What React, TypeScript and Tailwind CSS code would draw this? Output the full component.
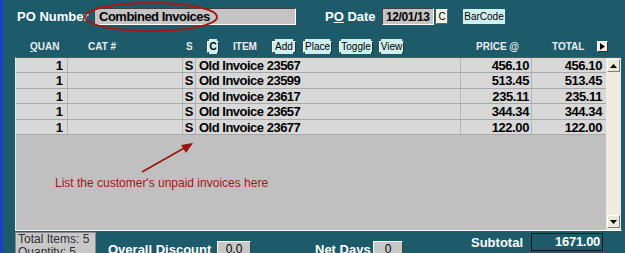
import React from "react";

const rows = [
  { qty: "1", s: "S", item: "Old Invoice 23567", price: "456.10", total: "456.10" },
  { qty: "1", s: "S", item: "Old Invoice 23599", price: "513.45", total: "513.45" },
  { qty: "1", s: "S", item: "Old Invoice 23617", price: "235.11", total: "235.11" },
  { qty: "1", s: "S", item: "Old Invoice 23657", price: "344.34", total: "344.34" },
  { qty: "1", s: "S", item: "Old Invoice 23677", price: "122.00", total: "122.00" },
];

function ScrollButton({ up }: { up: boolean }) {
  return (
    <div className="flex h-[13px] w-[13px] items-center justify-center border border-t-white border-l-white border-r-[#808080] border-b-[#808080] bg-[#ece9d8]">
      <svg width="7" height="4" viewBox="0 0 7 4">
        {up ? <polygon points="0,4 7,4 3.5,0" fill="#000" /> : <polygon points="0,0 7,0 3.5,4" fill="#000" />}
      </svg>
    </div>
  );
}

export default function App() {
  return (
    <div
      className="relative h-[253px] w-[625px] overflow-hidden border-l-[3px] border-[#1c3fd0] bg-[#1d5b6a] text-white"
      style={{ fontFamily: '"Liberation Sans", Arial, sans-serif' }}
    >
      {/* title row */}
      <div className="mt-[8px] flex h-[17px] items-center">
        <div className="ml-[14px] w-[77px] whitespace-nowrap text-[13px] font-bold">PO Number</div>
        <div className="flex h-[17px] w-[202px] items-center border border-t-[#404040] border-l-[#404040] border-r-white border-b-white bg-[#c4c4c4] pl-[4px] text-[13px] font-bold tracking-[-0.5px] text-black">
          Combined Invoices
        </div>
        <div className="ml-[29px] w-[57px] whitespace-nowrap text-[13px] font-bold">
          P<span className="underline">O</span> Date
        </div>
        <div className="flex h-[17px] w-[52px] items-center border border-t-[#404040] border-l-[#404040] border-r-white border-b-white bg-[#c4c4c4] pl-[3px] text-[12px] font-bold tracking-[-0.4px] text-black">
          12/01/13
        </div>
        <div className="ml-[2px] flex h-[15px] w-[12px] items-center justify-center border border-t-white border-l-white border-r-[#606060] border-b-[#606060] bg-[#f4f0e2] text-[10px] text-black">
          C
        </div>
        <div className="ml-[16px] flex h-[12px] w-[40px] items-center justify-center border border-t-white border-l-white border-r-[#303030] border-b-[#303030] bg-[#d0f0f0] text-[10px] text-black">
          <span className="block bg-[#d0f0f0] px-[1px] text-black">BarCode</span>
        </div>
      </div>

      {/* header row */}
      <div className="mt-[15px] flex h-[13px] items-center text-[10px] font-bold text-[#e8eeee]">
        <span className="ml-[27px] w-[58px]">
          <span className="underline">Q</span>UAN
        </span>
        <span className="w-[98px]">CAT #</span>
        <span className="w-[21px]">S</span>
        <div className="flex h-[12px] w-[12px] items-center justify-center border border-t-white border-l-white border-r-[#303030] border-b-[#303030] bg-[#d0f0f0] text-[10px] font-bold text-black">
          <span className="block bg-[#d0f0f0] text-black">C</span>
        </div>
        <span className="ml-[14px] w-[39px]">ITEM</span>
        <div className="flex h-[12px] w-[24px] items-center justify-center border border-t-white border-l-white border-r-[#303030] border-b-[#303030] bg-[#d0f0f0] text-[10px] font-normal text-black">
          <span className="block bg-[#d0f0f0] text-black">Add</span>
        </div>
        <div className="ml-[7px] flex h-[12px] w-[29px] items-center justify-center border border-t-white border-l-white border-r-[#303030] border-b-[#303030] bg-[#d0f0f0] text-[10px] font-normal text-black">
          <span className="block bg-[#d0f0f0] text-black">Place</span>
        </div>
        <div className="ml-[7px] flex h-[12px] w-[34px] items-center justify-center border border-t-white border-l-white border-r-[#303030] border-b-[#303030] bg-[#d0f0f0] text-[10px] font-normal text-black">
          <span className="block bg-[#d0f0f0] text-black">Toggle</span>
        </div>
        <div className="ml-[6px] flex h-[12px] w-[25px] items-center justify-center border border-t-white border-l-white border-r-[#303030] border-b-[#303030] bg-[#d0f0f0] text-[10px] font-normal text-black">
          <span className="block bg-[#d0f0f0] text-black">View</span>
        </div>
        <span className="ml-[72px] w-[76px] whitespace-nowrap">PRICE @</span>
        <span className="w-[45px]">TOTAL</span>
        <div className="flex h-[11px] w-[11px] items-center justify-center border border-t-white border-l-white border-r-[#303030] border-b-[#303030] bg-[#f2f0e6]">
          <svg width="5" height="7" viewBox="0 0 5 7">
            <polygon points="0,0 5,3.5 0,7" fill="#000" />
          </svg>
        </div>
      </div>

      {/* grid */}
      <div className="ml-[12px] mt-[4px] flex h-[174px] w-[607px] border border-t-[#5a5a5a] border-l-[#e8e8e8] border-b-white border-r-[#1d5b6a] bg-[#c0c0c0]">
        <div className="flex flex-1 flex-col text-[13px] font-bold text-black">
          {rows.map((r) => (
            <div key={r.item} className="flex h-[15.4px] border-b border-[#a8a8a8] bg-[#d8d8d8] leading-[15px]">
              <div className="w-[52px] border-r border-[#b4b4b4] pr-[4px] text-right">{r.qty}</div>
              <div className="w-[115px] border-r border-[#b4b4b4]"></div>
              <div className="w-[13px] border-r border-[#b4b4b4] text-center">{r.s}</div>
              <div className="w-[265px] border-r border-[#b4b4b4] pl-[3px] tracking-[-0.5px]">{r.item}</div>
              <div className="w-[71px] border-r border-[#b4b4b4] pr-[2px] text-right tracking-[-0.4px]">{r.price}</div>
              <div className="w-[74px] pr-[4px] text-right tracking-[-0.4px]">{r.total}</div>
            </div>
          ))}
          <div className="pl-[39px] pt-[39px] text-[12px] font-normal text-[#a31616]">
            List the customer&apos;s unpaid invoices here
          </div>
        </div>
        <div className="flex w-[15px] flex-col justify-between bg-[#efebde] pt-[1px] pb-[2px] pl-[1px]">
          <ScrollButton up />
          <ScrollButton up={false} />
        </div>
      </div>

      {/* bottom row */}
      <div className="mt-[1px] flex h-[22px] items-start">
        <div className="ml-[12px] h-[30px] w-[81px] border border-[#8a8a8a] bg-[#c8c8c8] px-[2px] text-[12px] leading-[13px] text-[#303030]">
          <div className="whitespace-nowrap">Total Items: 5</div>
          <div className="whitespace-nowrap">Quantity: 5</div>
        </div>
        <div className="ml-[12px] mt-[10px] w-[109px] whitespace-nowrap text-[13px] font-bold leading-[16px]">
          Overall Discount
        </div>
        <div className="mt-[9px] flex h-[16px] w-[34px] items-center justify-center border border-t-white border-l-white border-r-[#404040] border-b-[#404040] bg-[#c8c8c8] text-[12px] text-black">
          0.0
        </div>
        <div className="ml-[64px] mt-[10px] w-[58px] whitespace-nowrap text-[13px] font-bold leading-[16px]">
          Net Days
        </div>
        <div className="mt-[9px] flex h-[16px] w-[30px] items-center justify-center border border-t-white border-l-white border-r-[#404040] border-b-[#404040] bg-[#c8c8c8] text-[12px] text-black">
          0
        </div>
        <div className="ml-[68px] mt-[3px] w-[60px] whitespace-nowrap text-[13px] font-bold leading-[16px]">
          Subtotal
        </div>
        <div className="mt-[1px] flex h-[18px] w-[72px] items-center justify-end border border-[#0a1a1e] pr-[2px] text-[13px] font-bold tracking-[-0.3px]">
          1671.00
        </div>
      </div>

      {/* annotations */}
      <svg className="pointer-events-none absolute left-[-3px] top-0" width="625" height="253" viewBox="0 0 625 253">
        <ellipse cx="151" cy="17" rx="66" ry="14" fill="none" stroke="#a31a1a" strokeWidth="2" />
        <line x1="142" y1="172" x2="186" y2="147" stroke="#9a1212" strokeWidth="1.6" />
        <polygon points="193,143 181,145 186,153" fill="#9a1212" />
      </svg>
    </div>
  );
}
